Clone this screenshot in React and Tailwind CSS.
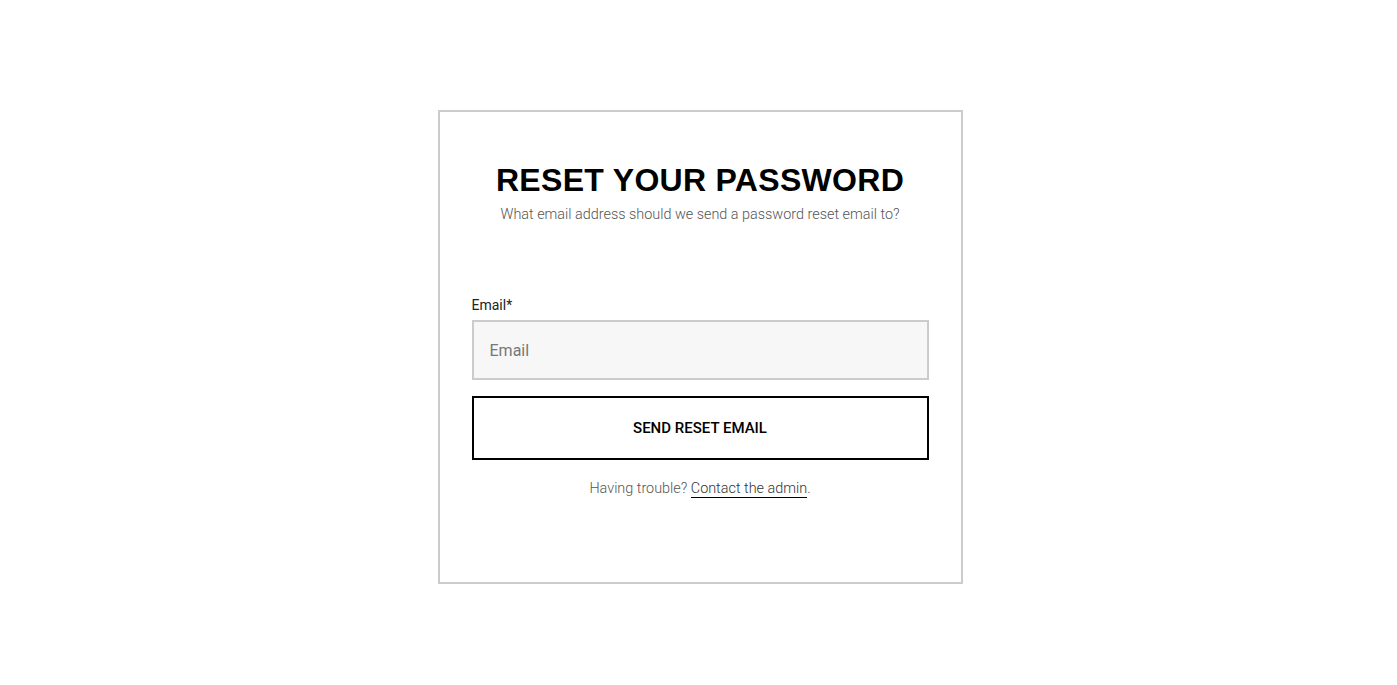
export default function App() {
  return (
    <div className="min-h-screen bg-white flex justify-center pl-[3px] pt-[110px]" style={{ fontFamily: "Roboto, 'Liberation Sans', sans-serif" }}>
      <div className="w-[525px] h-[474px] border-2 border-[#cccccc] px-8 pt-[49px]">
        <h1 className="text-center font-bold text-[32px] leading-[38px] text-black tracking-[0.3px]" style={{ fontFamily: "'Liberation Sans', Arial, sans-serif" }}>
          RESET YOUR PASSWORD
        </h1>
        <p className="text-center text-[14.4px] leading-[20px] font-light text-[#555555] mt-[6px]">
          What email address should we send a password reset email to?
        </p>
        <label className="block text-[14px] leading-[20px] text-[#222222] mt-[70px]">Email*</label>
        <input
          type="email"
          placeholder="Email"
          className="mt-[5px] block w-full h-[60px] border-2 border-[#cccccc] bg-[#f7f7f7] px-4 text-[16px] text-[#333] placeholder:text-[#777777] outline-none"
        />
        <button className="mt-[16px] block w-full h-[64px] border-2 border-black bg-white text-[15px] leading-[20px] font-medium text-black">
          SEND RESET EMAIL
        </button>
        <p className="mt-[19px] text-center text-[14.4px] leading-[20px] font-light text-[#555555]">
          Having trouble?{" "}
          <a href="#" className="text-[#333333] border-b border-black">Contact the admin</a>.
        </p>
      </div>
    </div>
  );
}
